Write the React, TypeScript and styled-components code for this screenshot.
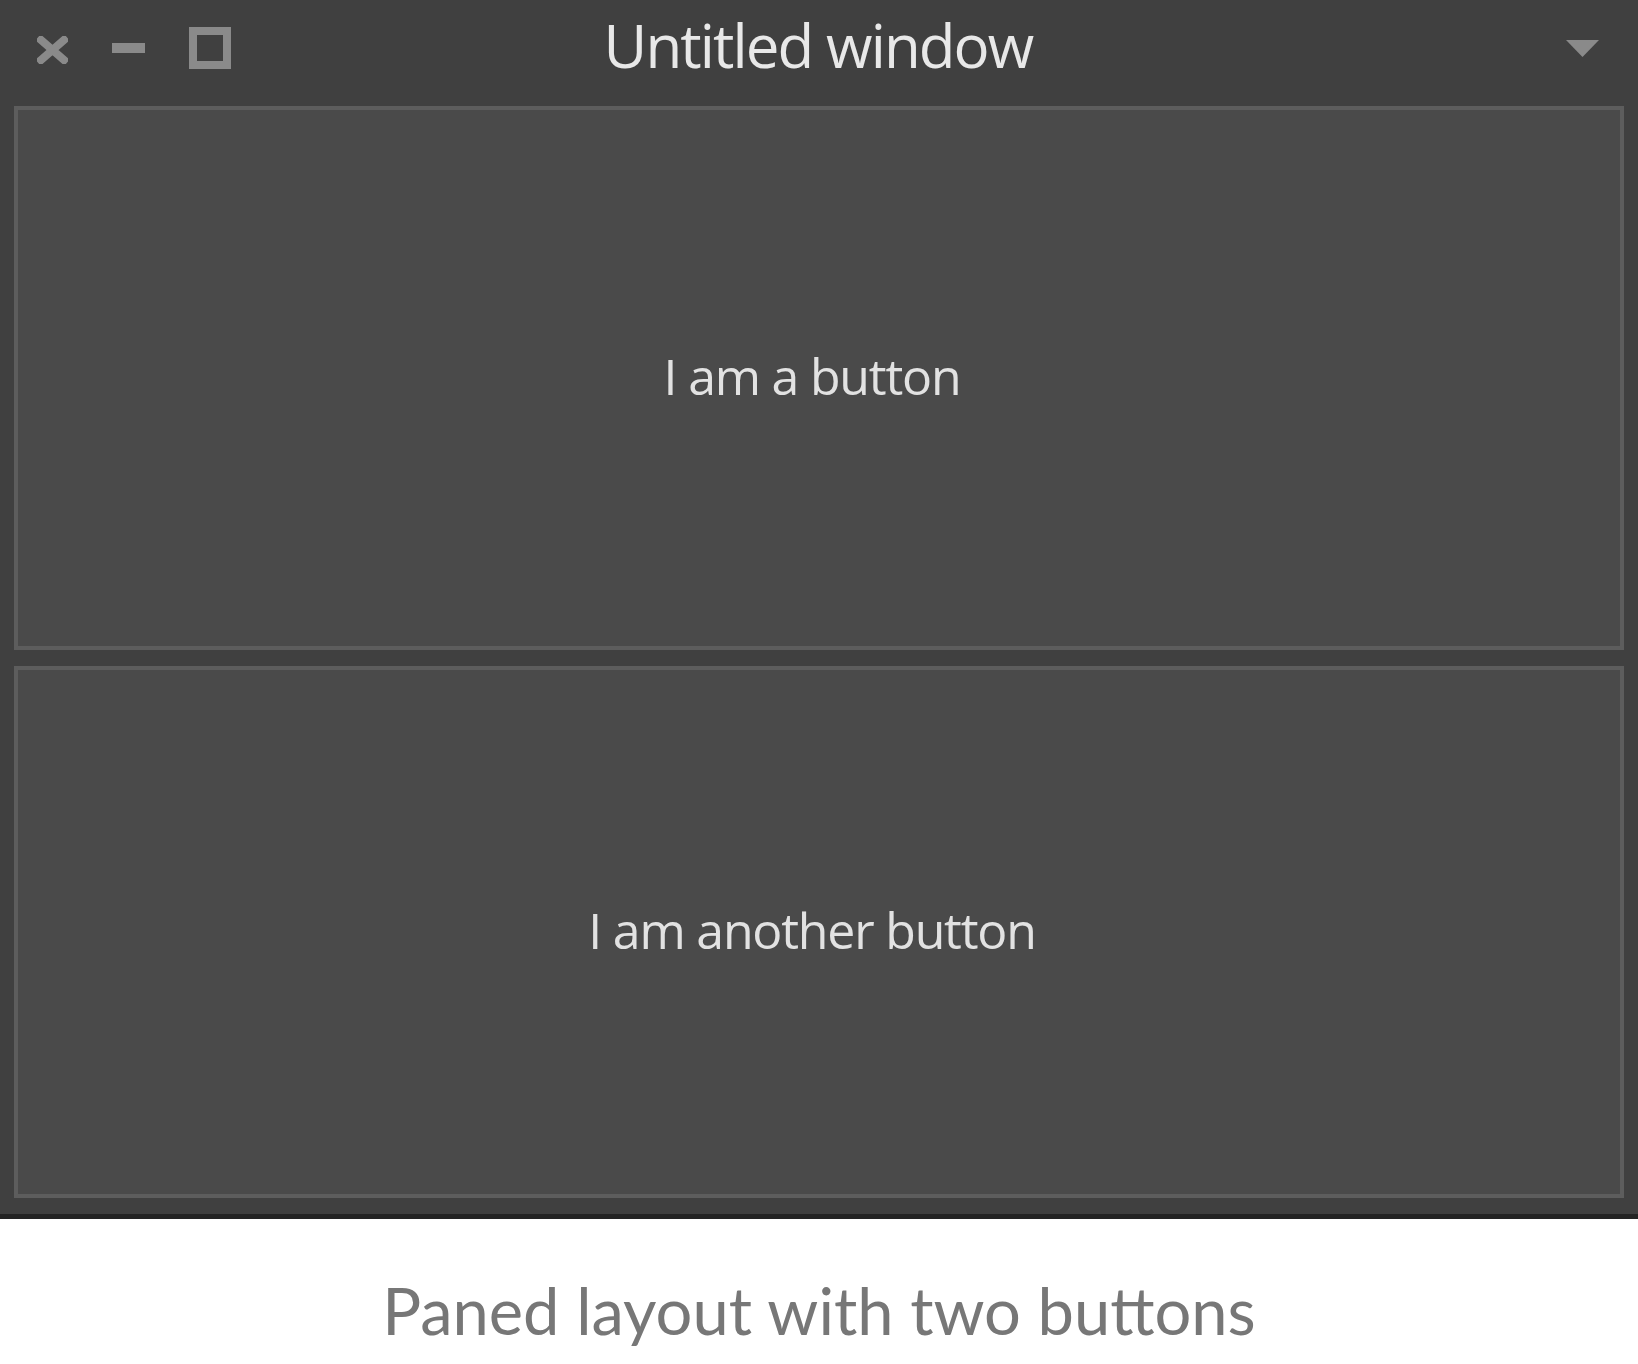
import React from "react";
import styled, { createGlobalStyle } from "styled-components";

const Global = createGlobalStyle`
  html, body { margin: 0; padding: 0; background: #ffffff; }
  body { width: 1638px; height: 1364px; overflow: hidden; }
`;

const Page = styled.div`
  display: flex;
  flex-direction: column;
  width: 1638px;
  height: 1364px;
`;

const Window = styled.div`
  display: flex;
  flex-direction: column;
  background: #404040;
  border-bottom: 5px solid #242424;
`;

const TitleBar = styled.div`
  display: grid;
  grid-template-columns: 1fr auto 1fr;
  align-items: center;
  height: 96px;
  padding: 0 39px 0 37px;
`;

const Controls = styled.div`
  display: flex;
  align-items: center;
  gap: 44px;
`;

const Title = styled.div`
  font-family: "Open Sans", "Noto Sans", sans-serif;
  font-size: 60px;
  letter-spacing: -1.9px;
  color: #e8e8e8;
  line-height: 1;
  margin-top: -6px;
`;

const Right = styled.div`
  display: flex;
  justify-content: flex-end;
`;

const Content = styled.div`
  display: flex;
  flex-direction: column;
  gap: 16px;
  padding: 10px 14px 16px;
`;

const Pane = styled.button<{ $h: number }>`
  height: ${(p) => p.$h}px;
  box-sizing: border-box;
  background: #4a4a4a;
  border: 4px solid #5d5d5d;
  display: flex;
  align-items: center;
  justify-content: center;
  font-family: "Open Sans", "Noto Sans", sans-serif;
  font-size: 50px;
  letter-spacing: -1.2px;
  color: #e2e2e2;
  padding: 0;
  margin: 0;
  cursor: default;
`;

const PaneLabel = styled.span`
  margin-left: -14px;
  margin-top: -4px;
`;

const Caption = styled.div`
  flex: 1;
  display: flex;
  justify-content: center;
  align-items: flex-start;
  padding-top: 52px;
  font-family: "Lato", sans-serif;
  font-weight: 400;
  font-size: 65px;
  color: #777777;
  line-height: 1.2;
`;

const CloseIcon = () => (
  <svg width="31" height="28" viewBox="0 0 31 28" style={{ marginTop: 4 }}>
    <path d="M4 4 L27 24 M27 4 L4 24" stroke="#8a8a8a" strokeWidth="8" strokeLinecap="square" />
  </svg>
);

const MinIcon = () => (
  <svg width="33" height="10" viewBox="0 0 33 10">
    <rect x="0" y="0" width="33" height="10" fill="#8a8a8a" />
  </svg>
);

const MaxIcon = () => (
  <svg width="42" height="42" viewBox="0 0 42 42">
    <rect x="4" y="4" width="34" height="34" fill="none" stroke="#8a8a8a" strokeWidth="8" />
  </svg>
);

const MenuIcon = () => (
  <svg width="33" height="17" viewBox="0 0 33 17">
    <path d="M0 0 H33 L16.5 17 Z" fill="#8a8a8a" />
  </svg>
);

export default function App() {
  return (
    <Page>
      <Global />
      <Window>
        <TitleBar>
          <Controls>
            <CloseIcon />
            <MinIcon />
            <MaxIcon />
          </Controls>
          <Title>Untitled window</Title>
          <Right>
            <MenuIcon />
          </Right>
        </TitleBar>
        <Content>
          <Pane $h={544}>
            <PaneLabel>I am a button</PaneLabel>
          </Pane>
          <Pane $h={532}>
            <PaneLabel>I am another button</PaneLabel>
          </Pane>
        </Content>
      </Window>
      <Caption>Paned layout with two buttons</Caption>
    </Page>
  );
}
